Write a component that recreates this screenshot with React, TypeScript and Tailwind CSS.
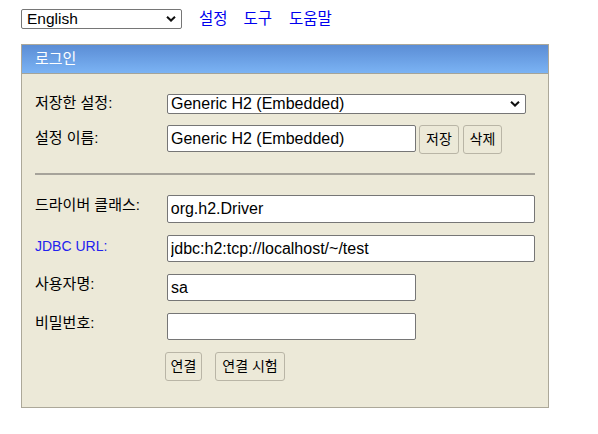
import { useState } from "react";

const font = "font-['Liberation_Sans','Noto_Sans_CJK_KR',sans-serif]";

function Chevron() {
  return (
    <svg className="pointer-events-none absolute right-[6px] top-1/2 -translate-y-1/2" width="10" height="7" viewBox="0 0 10 7">
      <path d="M1 1.2 L5 5 L9 1.2" fill="none" stroke="#111" strokeWidth="2" />
    </svg>
  );
}

export default function App() {
  const [lang, setLang] = useState("en");
  const [setting, setSetting] = useState("Generic H2 (Embedded)");
  const [name, setName] = useState("Generic H2 (Embedded)");
  const [driver, setDriver] = useState("org.h2.Driver");
  const [url, setUrl] = useState("jdbc:h2:tcp://localhost/~/test");
  const [user, setUser] = useState("sa");
  const [pwd, setPwd] = useState("");

  const inputCls =
    "h-[27px] border border-[#767676] rounded-[2px] bg-white px-[3px] text-[16px] text-black outline-none";
  const btnCls =
    "h-[29px] border border-[#b9b5a6] rounded-[3px] bg-[#ece9d8] px-[3px] text-[14px] text-black";
  const labelCls = "w-[132px] text-[15px] leading-[20px]";

  return (
    <div className={`min-h-screen bg-white pl-[21px] pt-[9px] text-[15px] text-black ${font}`}>
      {/* Top bar */}
      <div className="flex h-[20px] items-center leading-[20px]">
        <div className="relative w-[161px]">
          <select
            value={lang}
            onChange={(e) => setLang(e.target.value)}
            className="h-[20px] w-full appearance-none border border-[#767676] rounded-[2px] bg-white pl-[5px] text-[15.5px] leading-[18px] text-black outline-none"
          >
            <option value="en">English</option>
            <option value="ko">한국어</option>
          </select>
          <Chevron />
        </div>
        <a href="#" className="ml-[17px] text-[15.5px] text-[#0000ee]">설정</a>
        <a href="#" className="ml-[16px] text-[15.5px] text-[#0000ee]">도구</a>
        <a href="#" className="ml-[17px] text-[15.5px] text-[#0000ee]">도움말</a>
      </div>

      {/* Login panel */}
      <div className="mt-[15px] w-[528px] border border-[#aca899] bg-[#ece9d8]">
        <div className="h-[29px] border-b border-[#a4a49a] bg-gradient-to-b from-[#5b8dd5] to-[#7bb3f4] pl-[13px] leading-[28px] text-white">
          로그인
        </div>

        <div className="px-[13px] pt-[19px] pb-[26px]">
          <div className="flex h-[20px] items-start">
            <div className={labelCls}>저장한 설정:</div>
            <div className="relative w-[359px]">
              <select
                value={setting}
                onChange={(e) => setSetting(e.target.value)}
                className="h-[20px] w-full appearance-none border border-[#767676] rounded-[2px] bg-white pl-[3px] text-[16px] leading-[18px] text-black outline-none"
              >
                <option>Generic H2 (Embedded)</option>
                <option>Generic H2 (Server)</option>
              </select>
              <Chevron />
            </div>
          </div>

          <div className="mt-[12px] flex h-[29px] items-start">
            <div className={`${labelCls} pt-[3px]`}>설정 이름:</div>
            <input value={name} onChange={(e) => setName(e.target.value)} className={`${inputCls} w-[249px]`} />
            <button className={`${btnCls} ml-[3px] w-[40px]`}>저장</button>
            <button className={`${btnCls} ml-[4px] w-[39px]`}>삭제</button>
          </div>

          <div className="mt-[19px] border-t-2 border-[#a6a39a]" />

          <div className="mt-[20px] flex h-[28px] items-start">
            <div className={labelCls}>드라이버 클래스:</div>
            <input value={driver} onChange={(e) => setDriver(e.target.value)} className={`${inputCls} h-[28px] w-[369px]`} />
          </div>

          <div className="mt-[12px] flex h-[27px] items-start">
            <div className="w-[132px] pt-[1px] text-[14px] leading-[20px] text-[#2222ee]">JDBC URL:</div>
            <input value={url} onChange={(e) => setUrl(e.target.value)} className={`${inputCls} w-[369px]`} />
          </div>

          <div className="mt-[12px] flex h-[27px] items-start">
            <div className={`${labelCls} leading-[18px]`}>사용자명:</div>
            <input value={user} onChange={(e) => setUser(e.target.value)} className={`${inputCls} w-[249px]`} />
          </div>

          <div className="mt-[12px] flex h-[27px] items-start">
            <div className={labelCls}>비밀번호:</div>
            <input type="password" value={pwd} onChange={(e) => setPwd(e.target.value)} className={`${inputCls} w-[249px]`} />
          </div>

          <div className="mt-[12px] flex h-[29px] items-start pl-[130px]">
            <button className={`${btnCls} w-[37px]`}>연결</button>
            <button className={`${btnCls} ml-[13px] w-[70px]`}>연결 시험</button>
          </div>
        </div>
      </div>
    </div>
  );
}
